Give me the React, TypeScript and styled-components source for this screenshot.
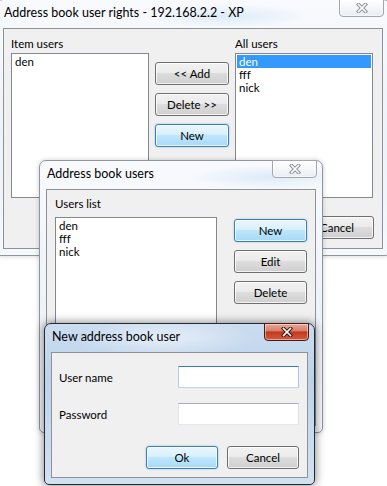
import React from 'react';
import styled, { createGlobalStyle } from 'styled-components';

const GlobalStyle = createGlobalStyle`
  html, body {
    margin: 0;
    padding: 0;
    background: #fff;
  }
  body {
    font-family: "Segoe UI", Lato, "Noto Sans", sans-serif;
    font-size: 11.5px;
    color: #000;
  }
  * {
    box-sizing: border-box;
  }
`;

const Desktop = styled.div`
  position: relative;
  width: 387px;
  height: 486px;
  overflow: hidden;
  background: #fff;
`;

type Placement = {
  $left: number;
  $top: number;
  $width: number;
  $height: number;
  $active?: boolean;
};

// windows sit on a free desktop, so they are placed by coordinates
const Frame = styled.div<Placement>`
  position: absolute;
  left: ${p => p.$left}px;
  top: ${p => p.$top}px;
  width: ${p => p.$width}px;
  height: ${p => p.$height}px;
  display: flex;
  flex-direction: column;
  padding: 0 6px 6px;
  border: 1px solid ${p => (p.$active ? '#232a33' : '#8f959c')};
  border-radius: 7px 7px 5px 5px;
  background: ${p =>
    p.$active
      ? 'radial-gradient(ellipse 90px 20px at 120px 14px, rgba(255,255,255,0.55), transparent), linear-gradient(180deg, #cadcf0 0%, #bdd3eb 35%, #d2e1f2 100%)'
      : 'radial-gradient(ellipse 80px 12px at 230px 16px, rgba(205,225,245,0.6), transparent), linear-gradient(180deg, #f8fafd 0%, #eef3f9 55%, #f5f8fc 100%)'};
  box-shadow: ${p =>
    p.$active ? '0 0 8px 1px rgba(0, 0, 0, 0.45)' : '0 0 5px rgba(0, 0, 0, 0.2)'};
`;

const TitleBar = styled.div`
  flex: none;
  height: 28px;
  display: flex;
  justify-content: space-between;
  align-items: flex-start;
`;

const Title = styled.span`
  margin: 5px 0 0 1px;
  font-size: 12.5px;
  line-height: 15px;
  white-space: nowrap;
  color: #000;
`;

const CloseButton = styled.div<{ $active?: boolean }>`
  width: 45px;
  height: 18px;
  margin: -1px -1px 0 0;
  display: flex;
  align-items: center;
  justify-content: center;
  border: 1px solid ${p => (p.$active ? '#4a1a12' : '#a3a7ad')};
  border-radius: 0 0 4px 4px;
  background: ${p =>
    p.$active
      ? 'linear-gradient(180deg, #e9a798 0%, #d9806c 42%, #c2391d 50%, #d45a3f 100%)'
      : 'linear-gradient(180deg, #ffffff 0%, #f4f6f9 50%, #e9edf2 100%)'};
  box-shadow: inset 0 0 0 1px rgba(255, 255, 255, 0.45);
`;

const CloseGlyph = ({ active }: { active?: boolean }) => (
  <svg width="12" height="10" viewBox="0 0 12 10">
    <path
      d="M2.5 1.5 L9.5 8.5 M9.5 1.5 L2.5 8.5"
      stroke={active ? '#3a1610' : '#8c9096'}
      strokeWidth="3.6"
      strokeLinecap="square"
      fill="none"
    />
    <path
      d="M2.5 1.5 L9.5 8.5 M9.5 1.5 L2.5 8.5"
      stroke="#fff"
      strokeWidth="1.6"
      strokeLinecap="square"
      fill="none"
    />
  </svg>
);

const Client = styled.div`
  flex: 1;
  min-height: 0;
  overflow: hidden;
  background: #f0f0f0;
  border: 1px solid #8e9196;
`;

const Label = styled.div<{ $gap?: number }>`
  line-height: 15px;
  margin-bottom: ${p => p.$gap ?? 2}px;
  white-space: nowrap;
`;

const ListBox = styled.div<{ $height: number; $width?: number }>`
  width: ${p => (p.$width ? `${p.$width}px` : 'auto')};
  height: ${p => p.$height}px;
  display: flex;
  flex-direction: column;
  padding: 1px;
  background: #fff;
  border: 1px solid #828790;
`;

const ListItem = styled.div<{ $selected?: boolean }>`
  height: 13px;
  line-height: 13px;
  padding: 0 2px;
  white-space: nowrap;
  background: ${p => (p.$selected ? '#3399ff' : 'transparent')};
  color: ${p => (p.$selected ? '#fff' : '#000')};
`;

const Button = styled.div<{ $default?: boolean; $width?: number }>`
  width: ${p => p.$width ?? 73}px;
  height: 23px;
  display: flex;
  align-items: center;
  justify-content: center;
  border: 1px solid ${p => (p.$default ? '#3c7fb1' : '#707070')};
  border-radius: 3px;
  background: ${p =>
    p.$default
      ? 'linear-gradient(180deg, #eaf6fd 0%, #d9f0fc 45%, #bee6fd 50%, #a7d9f5 100%)'
      : 'linear-gradient(180deg, #f2f2f2 0%, #ebebeb 45%, #dddddd 50%, #cfcfcf 100%)'};
  box-shadow: inset 0 0 0 1px rgba(255, 255, 255, 0.75)
    ${p => (p.$default ? ', 0 0 2px rgba(60, 160, 230, 0.6)' : '')};
`;

const ButtonStack = styled.div<{ $top: number }>`
  display: flex;
  flex-direction: column;
  gap: 8px;
  padding-top: ${p => p.$top}px;
`;

const Column = styled.div`
  display: flex;
  flex-direction: column;
`;

/* Address book user rights */
const RightsBody = styled.div`
  display: grid;
  grid-template-columns: 138px 74px 138px;
  column-gap: 6px;
  padding: 7px 9px 0 7px;
`;

const RightsFooter = styled.div`
  grid-column: 1 / -1;
  display: flex;
  justify-content: flex-end;
  margin: 18px -1px 0 0;
`;

/* Address book users */
const UsersBody = styled.div`
  display: flex;
  gap: 17px;
  padding: 6px 9px 0 8px;
`;

/* New address book user */
const NewUserBody = styled.div`
  display: flex;
  flex-direction: column;
  padding: 13px 8px 0 7px;
`;

const FieldGrid = styled.div`
  display: grid;
  grid-template-columns: 1fr 121px;
  row-gap: 15px;
  align-items: center;
`;

const FieldLabel = styled.span`
  line-height: 15px;
`;

const TextBox = styled.div<{ $focused?: boolean }>`
  height: 22px;
  background: #fff;
  border: 1px solid;
  border-color: ${p =>
    p.$focused ? '#3d7bad #a4c9e3 #b7d9ed #b5cfe7' : '#abadb3 #dbdfe6 #e3e9ef #e2e3ea'};
`;

const DialogFooter = styled.div`
  display: flex;
  justify-content: flex-end;
  gap: 9px;
  margin-top: 21px;
`;

const WindowTitle = ({ text, active }: { text: string; active?: boolean }) => (
  <TitleBar>
    <Title>{text}</Title>
    <CloseButton $active={active}>
      <CloseGlyph active={active} />
    </CloseButton>
  </TitleBar>
);

export default function App() {
  return (
    <>
      <GlobalStyle />
      <Desktop>
        <Frame $left={-4} $top={-1} $width={394} $height={257}>
          <WindowTitle text="Address book user rights - 192.168.2.2 - XP" />
          <Client>
            <RightsBody>
              <Column>
                <Label>Item users</Label>
                <ListBox $height={145}>
                  <ListItem>den</ListItem>
                </ListBox>
              </Column>
              <ButtonStack $top={26}>
                <Button $width={74}>&lt;&lt; Add</Button>
                <Button $width={74}>Delete &gt;&gt;</Button>
                <Button $width={74} $default>
                  New
                </Button>
              </ButtonStack>
              <Column>
                <Label>All users</Label>
                <ListBox $height={145}>
                  <ListItem $selected>den</ListItem>
                  <ListItem>fff</ListItem>
                  <ListItem>nick</ListItem>
                </ListBox>
              </Column>
              <RightsFooter>
                <Button $width={74}>Cancel</Button>
              </RightsFooter>
            </RightsBody>
          </Client>
        </Frame>

        <Frame $left={39} $top={160} $width={284} $height={273}>
          <WindowTitle text="Address book users" />
          <Client>
            <UsersBody>
              <Column>
                <Label $gap={6}>Users list</Label>
                <ListBox $height={204} $width={162}>
                  <ListItem>den</ListItem>
                  <ListItem>fff</ListItem>
                  <ListItem>nick</ListItem>
                </ListBox>
              </Column>
              <ButtonStack $top={23}>
                <Button $default>New</Button>
                <Button>Edit</Button>
                <Button>Delete</Button>
              </ButtonStack>
            </UsersBody>
          </Client>
        </Frame>

        <Frame $left={44} $top={323} $width={271} $height={162} $active>
          <WindowTitle text="New address book user" active />
          <Client>
            <NewUserBody>
              <FieldGrid>
                <FieldLabel>User name</FieldLabel>
                <TextBox $focused />
                <FieldLabel>Password</FieldLabel>
                <TextBox />
              </FieldGrid>
              <DialogFooter>
                <Button $default $width={72}>
                  Ok
                </Button>
                <Button $width={72}>Cancel</Button>
              </DialogFooter>
            </NewUserBody>
          </Client>
        </Frame>
      </Desktop>
    </>
  );
}
